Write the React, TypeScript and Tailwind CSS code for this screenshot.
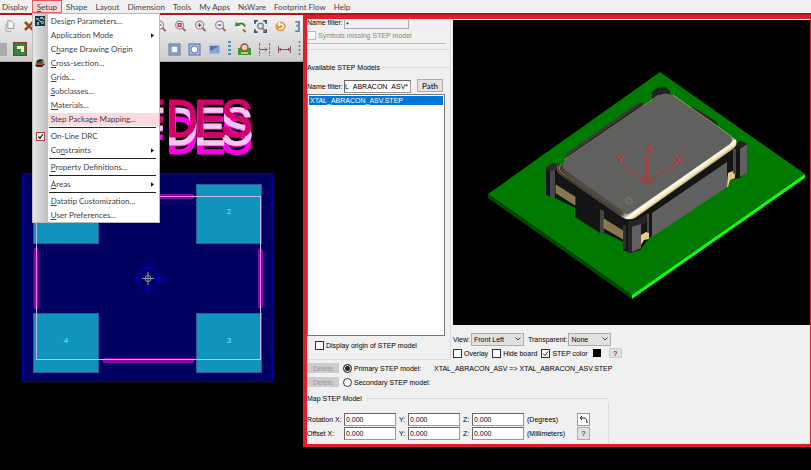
import React from 'react';

const menus = ['Display', 'Setup', 'Shape', 'Layout', 'Dimension', 'Tools', 'My Apps', 'NsWare', 'Footprint Flow', 'Help'];

type Item = { key?: string; before?: string; label: string; arrow?: boolean; active?: boolean; icon?: string };

const setupGroups: Item[][] = [
  [
    { label: 'Design Parameters...', icon: 'params' },
    { label: 'Application Mode', arrow: true },
    { before: 'C', key: 'h', label: 'ange Drawing Origin' },
    { key: 'C', label: 'ross-section...', icon: 'layers' },
    { key: 'G', label: 'rids...' },
    { key: 'S', label: 'ubclasses...' },
    { key: 'M', label: 'aterials...' },
    { label: 'Step Package Mapping...', active: true },
  ],
  [
    { label: 'On-Line DRC', icon: 'check' },
    { before: 'Co', key: 'n', label: 'straints', arrow: true },
  ],
  [{ key: 'P', label: 'roperty Definitions...' }],
  [{ key: 'A', label: 'reas', arrow: true }],
  [
    { key: 'D', label: 'atatip Customization...' },
    { key: 'U', label: 'ser Preferences...' },
  ],
];

function MenuIcon({ name }: { name?: string }) {
  if (name === 'check') {
    return (
      <svg viewBox="0 0 10 10" className="h-[9px] w-[9px]">
        <rect x="0.5" y="0.5" width="9" height="9" fill="#fff" stroke="#a03030" />
        <path d="M2.5 5l2 2 3-4.5" fill="none" stroke="#111" strokeWidth="1.4" />
      </svg>
    );
  }
  if (name === 'params') {
    return (
      <svg viewBox="0 0 10 10" className="h-[10px] w-[10px]">
        <rect width="10" height="10" fill="#1c3440" />
        <path d="M1 2h3v2H1zM6 5h3v3H6z" fill="#4b9ec0" />
        <path d="M5 1h2v2H5zM2 6h2v3H2z" fill="#7cc3a0" />
        <path d="M7 1l2 3M4 4l2 2" stroke="#dce8f0" />
      </svg>
    );
  }
  if (name === 'layers') {
    return (
      <svg viewBox="0 0 10 10" className="h-[10px] w-[10px]">
        <path d="M0 7l4-2 6 1-3 3H2z" fill="#2b2118" />
        <path d="M0 5l4-2 6 1-3 2H2z" fill="#44663a" />
        <path d="M1 3l4-2 4 1-3 2H2z" fill="#33261e" />
        <path d="M2 6.5h6" stroke="#b7512e" />
      </svg>
    );
  }
  return null;
}

function SetupMenu() {
  return (
    <div className="absolute left-0 top-full z-10 w-32 border border-[#b9b9b9] bg-gradient-to-r from-[#e6e6e6] to-[#bdbdbd] bg-[length:15px_100%] bg-no-repeat bg-white text-[#444]">
      {setupGroups.map((group, i) => (
        <div key={i}>
          {i > 0 && <div className="ml-4 mr-[3px] flex h-[3px] items-center"><hr className="w-full border-[#222]" /></div>}
          {group.map((item) => (
            <button key={item.label} className="flex h-[14px] w-full items-center text-left">
              <span className="flex w-[15px] shrink-0 justify-center"><MenuIcon name={item.icon} /></span>
              <span className={item.active ? 'flex h-[13px] grow items-center bg-[#fadadd] pl-[3px]' : 'flex grow items-center pl-[3px]'}>
                <span className="whitespace-nowrap">
                  {item.before}
                  {item.key && <u>{item.key}</u>}
                  {item.label}
                </span>
              </span>
              {item.arrow && (
                <svg viewBox="0 0 4 6" className="mr-[5px] h-[5px] w-[3px]">
                  <path d="M0 0l4 3-4 3z" fill="#111" />
                </svg>
              )}
            </button>
          ))}
        </div>
      ))}
    </div>
  );
}

function MenuBar() {
  return (
    <nav className="flex h-[13px] items-center bg-[#f0f0f0] font-[Lato,sans-serif] text-[8px] leading-none text-[#444]">
      {menus.map((name) =>
        name === 'Setup' ? (
          <div key={name} className="relative">
            <button className="h-[13px] border border-[#e05a60] bg-[#fbd5d7] px-1"><u>S</u>etup</button>
            <SetupMenu />
          </div>
        ) : (
          <button key={name} className="h-[13px] whitespace-nowrap px-1 first:pl-[2px]">{name}</button>
        )
      )}
    </nav>
  );
}

function Lens({ mark }: { mark: string }) {
  return (
    <svg viewBox="0 0 14 14" className="h-[14px] w-[13px]">
      <path d="M8.500 8.500l4 4" stroke="#9a6a4c" strokeWidth="2.200" />
      <circle cx="6" cy="6" r="4.300" fill="#eef0fa" stroke="#8a8aa8" strokeWidth="1.300" />
      <path d={mark} fill="none" stroke="#c8283a" strokeWidth="1.400" />
    </svg>
  );
}

function Toolbar() {
  return (
    <div className="flex h-[47px] flex-col justify-around border-b border-[#a8a8a8] bg-gradient-to-b from-[#f2f2f2] to-[#cccccc]">
      <div className="flex items-center justify-between pl-1 pr-[2px]">
        <div className="flex items-center gap-[9px]">
          <svg viewBox="0 0 12 14" className="h-3 w-[11px]">
            <path d="M4 1h4l3 3v6H4zM2 4v9h6" fill="#f6f6f6" stroke="#8c8c8c" />
          </svg>
          <svg viewBox="0 0 10 10" className="h-[10px] w-[10px]">
            <path d="M1 1l8 8M9 1L1 9" stroke="#9c4a1c" strokeWidth="2.500" />
          </svg>
        </div>
        <div className="flex items-center gap-[7px]">
          <Lens mark="M4 6h4" />
          <Lens mark="M4.500 4.500h3v3h-3z" />
          <Lens mark="M4 6h4M6 4v4" />
          <Lens mark="M4 6h4" />
          <svg viewBox="0 0 14 14" className="h-[13px] w-[13px]">
            <path d="M8.500 9l4 4" stroke="#9a6a4c" strokeWidth="2.200" />
            <circle cx="7" cy="7" r="4" fill="#e8efe8" />
            <path d="M12 7C10 3 7 3 4 5" fill="none" stroke="#3c8c3c" strokeWidth="2.200" />
            <path d="M1 7l1-5 5 4z" fill="#3c8c3c" />
          </svg>
          <svg viewBox="0 0 14 14" className="h-[13px] w-[13px]">
            <path d="M1 4V1h3M10 1h3v3M13 10v3h-3M4 13H1v-3" fill="none" stroke="#345a7c" strokeWidth="2" />
            <circle cx="7" cy="6.500" r="3" fill="#dce9f5" stroke="#6b87a0" strokeWidth="1.400" />
            <path d="M9 9l3 3" stroke="#a87440" strokeWidth="2" />
          </svg>
          <svg viewBox="0 0 14 14" className="h-[13px] w-[13px]">
            <circle cx="7" cy="7" r="5.500" fill="#e9963c" />
            <path d="M5 4.500h2.500a2.500 2.500 0 010 5H5M6.500 2.500l-2 2 2 2" fill="none" stroke="#fff" strokeWidth="1.500" />
          </svg>
          <svg viewBox="0 0 7 14" className="h-[13px] w-[7px]">
            <path d="M1 2h4v4H2h3v6H1" fill="none" stroke="#6688b0" strokeWidth="2" />
          </svg>
        </div>
      </div>
      <div className="flex items-center justify-between pr-[2px]">
        <div className="flex items-center gap-[6px]">
          <span className="h-[13px] w-[7px] bg-[#aaa]" />
          <svg viewBox="0 0 14 14" className="h-[14px] w-[14px]">
            <rect x="0.500" y="0.500" width="13" height="13" fill="#3b8040" stroke="#883828" />
            <path d="M4 4h7v6H8V7H4z" fill="#e2f3d8" />
          </svg>
        </div>
        <div className="flex items-center gap-[7px]">
          <svg viewBox="0 0 13 13" className="h-[13px] w-[13px]">
            <rect x="1" y="1" width="11" height="11" fill="#a9bde0" stroke="#5670a4" />
            <rect x="3" y="3" width="7" height="7" fill="#f2f5fb" stroke="#5670a4" />
          </svg>
          <svg viewBox="0 0 13 13" className="h-[13px] w-[13px]">
            <rect x="1" y="1" width="11" height="11" fill="#a9bde0" stroke="#5670a4" />
            <circle cx="6.500" cy="6.500" r="3.500" fill="#f2f5fb" stroke="#5670a4" />
          </svg>
          <svg viewBox="0 0 13 13" className="h-[13px] w-[13px]">
            <rect x="1" y="2" width="11" height="9" fill="#8aa2cf" stroke="#c5d0e6" />
            <path d="M2 3h9L2 8z" fill="#5670a4" />
          </svg>
          <svg viewBox="0 0 3 16" className="h-4 w-[3px]">
            <path d="M1.500 0v16" stroke="#4f94c4" strokeWidth="3" strokeDasharray="2 2" />
          </svg>
          <svg viewBox="0 0 13 13" className="h-[13px] w-[13px]">
            <rect y="5" width="13" height="7" fill="#3c9a34" />
            <circle cx="6.500" cy="4.500" r="3.500" fill="#d7d7b8" stroke="#a8503c" strokeWidth="1.500" />
            <path d="M3 10h7" stroke="#e6e070" strokeWidth="1.500" />
          </svg>
          <svg viewBox="0 0 13 13" className="h-[13px] w-[13px]">
            <path d="M1.500 0v13M11.500 0v13" stroke="#777" strokeDasharray="3 1" />
            <path d="M2 6.500h7M7 4.500l2 2-2 2" fill="none" stroke="#b8444c" />
          </svg>
          <svg viewBox="0 0 13 13" className="h-[13px] w-[13px]">
            <path d="M0.500 3v7M12.500 3v7" stroke="#666" />
            <path d="M1 6.500h11M3 5L1 6.500 3 8M10 5l2 1.500L10 8" fill="none" stroke="#b8444c" />
          </svg>
          <svg viewBox="0 0 3 16" className="h-4 w-[3px]">
            <path d="M1.500 0v16" stroke="#888" strokeWidth="2" strokeDasharray="2 2" />
          </svg>
        </div>
      </div>
    </div>
  );
}

// pad 1 has its number under the open menu
const pads = [
  { x: 34, y: 123, label: '' },
  { x: 197, y: 123, label: '2' },
  { x: 34, y: 252, label: '4' },
  { x: 197, y: 252, label: '3' },
];

function BoardCanvas() {
  return (
    <svg viewBox="0 0 303 408" className="w-full bg-black">
      <text
        x="150 182 210 237"
        y="75"
        textAnchor="middle"
        fontSize="56"
        fill="#d6006c"
        stroke="#d6006c"
        strokeWidth="1"
        strokeLinejoin="round"
        className="font-['Liberation_Mono',monospace] [filter:drop-shadow(0_8px_0_#ffc4f4)_drop-shadow(0_9px_0_#ff00e6)]"
      >
        FDES
      </text>
      <rect x="22.500" y="111.500" width="250" height="208" fill="#000062" stroke="#0000b0" />
      {pads.map((pad) => (
        <g key={pad.label}>
          <rect x={pad.x - 0.5} y={pad.y - 0.5} width="65" height="59" fill="#1094bc" stroke="#2e5b96" />
          {pad.label && <text x={pad.x + 32} y={pad.y + 29} textAnchor="middle" fontSize="8" fill="#7fe9f4">{pad.label}</text>}
        </g>
      ))}
      <path d="M104 134.500h88M105 298.500h87M36 188v57M260.500 189v55" stroke="#8a06a8" strokeWidth="5" strokeLinecap="round" />
      <rect x="36.500" y="134.500" width="224" height="163" fill="none" stroke="#c8b8ee" />
      <path d="M36.500 188v57M260.500 189v55M104 134.500h88" stroke="#f07cf4" />
      <g fill="none" stroke="#0000c8">
        <circle cx="148" cy="216.500" r="11" />
        <path d="M133 216.500h30M148 201v31" />
      </g>
      <g fill="none" stroke="#8f9c9c">
        <circle cx="148" cy="216.500" r="3" />
        <path d="M142 216.500h12M148 210v13" />
      </g>
    </svg>
  );
}

function StepViewer() {
  return (
    <svg viewBox="453 20 357 305" className="w-full bg-black">
      <defs>
        <linearGradient id="rim" gradientUnits="userSpaceOnUse" x1="679" y1="177" x2="684" y2="184">
          <stop offset="0" stopColor="#9a9a98" />
          <stop offset="0.350" stopColor="#fffdf4" />
          <stop offset="0.700" stopColor="#f4e8b4" />
          <stop offset="1" stopColor="#b5a268" />
        </linearGradient>
      </defs>
      <path d="M660 72l145 102-173 121-144-101z" fill="#007a00" />
      <path d="M488 194l144 101v4L488 198z" fill="#004a00" />
      <path d="M632 295l173-121v4L632 299z" fill="#19f519" />

      <path d="M566 155L638 103h5v6l-75 53z" fill="#2c2c2c" />
      <path d="M566 155l1-2 71-50 5-1-75 54v6z" fill="#3b3b3b" />
      <path d="M652 92l5-4 8-1 5 4v7l-18 8z" fill="#222" />
      <path d="M690 108l3-1 24 15 1 6z" fill="#262626" />

      <path d="M546 168l8-4 8 2 65 54 108-76 5-3 7 3v28l-7 6-12 2-76 55-12 15-10 3-7-3v-8l-18-9h-5l-25-16v-9l-20-10-9-3z" fill="#151515" />
      <path d="M546 167l7-4 8 2-6 6-5 1z" fill="#2c2c2c" />
      <path d="M550 171l5-1v28h-5z" fill="#474747" />
      <path d="M600 209l4 2v22h-4z" fill="#454545" />
      <path d="M556 185l19 12v8l-19-12zM604 219l19 12v8l-19-11z" fill="#85774e" stroke="#b5a56f" strokeWidth="0.500" />
      <path d="M628 221l8-1 11-6v8l-6 4v24l-11 3-2-1z" fill="#252525" />
      <path d="M632 227l9-3v24l-9 4z" fill="#606060" />
      <path d="M623 225h3v25l-3-2z" fill="#303030" />
      <path d="M647 214h2v21h-2z" fill="#484848" />
      <path d="M652 213l75-51v25l-75 50z" fill="#616161" />
      <path d="M641 235l5-3 3 1v6l-5 1-3 5z" fill="#e2cd8c" />
      <path d="M728 173l5-2 2 1v6l-5 2-2 7h-1z" fill="#e2cd8c" />
      <path d="M733 149h3v26l-3-2z" fill="#484848" />
      <path d="M740 148l7-4v29l-7 4z" fill="#606060" />
      <path d="M733 146l7-5 7 3-7 5z" fill="#202020" />

      <path d="M558 165q-3 6 3 10l61 42q6 4 13 1l98-69q5-4 3-9l-5-4-102 72z" fill="url(#rim)" />
      <path d="M560 163q-6 7 1 12l60 41 4-5-58-42z" fill="#41392a" />
      <path d="M561 164q-4 6 2 10l59 39" fill="none" stroke="#94835a" />
      <path d="M565 160l95-65q5-3 12 0l58 41q4 4 0 8l-98 68q-6 4-11 0l-56-42q-5-4 0-10z" fill="#60615e" />
      <path d="M563 169l57 40q5 4 3 7l-59-41z" fill="#4e4a3f" />
      <path d="M673 95l58 41" stroke="#a9987a" />
      <path d="M564 160l95-65" stroke="#89826d" />
      <circle cx="629" cy="201" r="3" fill="none" stroke="#9c7c34" strokeWidth="2" strokeDasharray="1 1" />

      <g stroke="#d62424" fill="none">
        <path d="M646.500 183v-28M646.500 183l-25-18M646.500 183l28-20" />
        <path d="M641 180l5 3 6-3" />
      </g>
      <g fill="#ee1c1c" fontSize="11" textAnchor="middle">
        <text x="649" y="151">Z</text>
        <text x="620" y="164">Y</text>
        <text x="678" y="164">X</text>
      </g>
    </svg>
  );
}

const field = 'h-[13px] min-w-0 border border-[#999] border-t-[#666] border-l-[#666] bg-white text-black';

function Check({ label, checked, muted }: { label: string; checked?: boolean; muted?: boolean }) {
  return (
    <label className={muted ? 'flex items-center gap-[2px] text-[#888]' : 'flex items-center gap-[2px]'}>
      <span className="relative flex">
        <input
          type="checkbox"
          defaultChecked={checked}
          disabled={muted}
          className="peer h-[9px] w-[9px] appearance-none border border-[#333] bg-white disabled:border-[#bbb]"
        />
        <svg viewBox="0 0 9 9" className="pointer-events-none absolute inset-0 hidden h-[9px] w-[9px] peer-checked:block">
          <path d="M2 4.500l2 2 3-4" fill="none" stroke="#222" />
        </svg>
      </span>
      {label}
    </label>
  );
}

function ModelList() {
  return (
    <div className="flex w-[144px] shrink-0 flex-col border-b border-r border-[#dcdcdc]">
      <div className="mr-px border-b border-[#dcdcdc] pb-[5px]">
        <label className="flex h-[9px] items-start">
          <span className="w-[37px] leading-[6px]">Name filter:</span>
          <input className="h-[9px] w-[65px] border border-t-0 border-[#aaa] bg-[#f0f0f0] px-px leading-[6px]" defaultValue="*" />
        </label>
        <div className="mt-[2px] mr-1 border-b border-[#bbb] pb-[3px]">
          <Check label="Symbols missing STEP model" muted />
        </div>
      </div>
      <fieldset className="mt-[13px] flex grow flex-col">
        <div className="flex items-center gap-[2px]">
          <h2>Available STEP Models</h2>
          <span className="h-px grow bg-[#dcdcdc]" />
        </div>
        <div className="mt-[7px] flex h-[15px] items-start">
          <label className="flex h-[15px] items-center">
            <span className="w-[37px]">Name filter:</span>
            <input className={`${field} w-[67px]`} defaultValue="L_ABRACON_ASV*" />
          </label>
          <button className="ml-[6px] h-[13px] w-[26px] border border-[#adadad] bg-[#e1e1e1] font-[Lato,sans-serif] text-[8px] leading-none">Path</button>
        </div>
        <ul className="mr-[5px] h-[242px] border border-[#777] bg-white p-px">
          <li className="h-[9px] bg-[#0078d7] pl-px leading-[9px] text-white">XTAL_ABRACON_ASV.STEP</li>
        </ul>
        <div className="py-[5px] pl-2">
          <Check label="Display origin of STEP model" />
        </div>
      </fieldset>
    </div>
  );
}

function ModelRadio({ label, checked }: { label: string; checked?: boolean }) {
  return (
    <div className="flex h-[14px] items-center">
      <button disabled className="mr-1 h-[10px] w-8 bg-[#ccc] text-[#999]">Delete</button>
      <label className="flex w-[91px] items-center gap-[2px]">
        <input
          type="radio"
          name="model"
          defaultChecked={checked}
          className="h-[9px] w-[9px] appearance-none rounded-full border border-[#333] bg-white checked:bg-[#222] checked:shadow-[inset_0_0_0_1px_#fff]"
        />
        {label}
      </label>
      {checked && <span className="whitespace-nowrap">XTAL_ABRACON_ASV =&gt; XTAL_ABRACON_ASV.STEP</span>}
    </div>
  );
}

function AxisRow({ name, unit, children }: { name: string; unit: string; children: React.ReactNode }) {
  return (
    <div className="flex h-[14px] items-center">
      {['X', 'Y', 'Z'].map((axis) => (
        <label key={axis} className="flex items-center">
          <span className={axis === 'X' ? 'w-[37px] whitespace-nowrap' : 'w-3 pl-[3px]'}>{axis === 'X' ? `${name} X:` : `${axis}:`}</span>
          <input className={`${field} w-[52px] px-px`} defaultValue="0.000" />
        </label>
      ))}
      <span className="ml-[3px] w-[50px]">{unit}</span>
      {children}
    </div>
  );
}

function MapModel() {
  return (
    <fieldset className="mt-[5px] w-[302px]">
      <div className="flex items-center gap-1">
        <h2>Map STEP Model</h2>
        <span className="h-px grow bg-[#dcdcdc]" />
      </div>
      <div className="border-r border-[#dcdcdc] pb-[4px] pt-[9px]">
        <AxisRow name="Rotation" unit="(Degrees)">
          <button aria-label="Reset" className="flex h-[13px] w-[13px] items-center justify-center border border-[#999] bg-white">
            <svg viewBox="0 0 9 9" className="h-[9px] w-[9px]">
              <path d="M1 3h4q3 0 3 5M3 1L1 3l2 2" fill="none" stroke="#222" />
            </svg>
          </button>
        </AxisRow>
        <AxisRow name="Offset" unit="(Millimeters)">
          <button className="h-[13px] w-[13px] border border-[#adadad] bg-[#e1e1e1]">?</button>
        </AxisRow>
      </div>
    </fieldset>
  );
}

const dropdown = 'h-[13px] appearance-none border border-[#adadad] bg-[#e1e1e1] pl-[2px]';

function Dropdown({ label, value, wide }: { label: string; value: string; wide?: boolean }) {
  return (
    <label className="flex items-center gap-px">
      {label}
      <span className="relative flex">
        <select className={wide ? `${dropdown} w-[53px]` : `${dropdown} w-[43px]`}>
          <option>{value}</option>
        </select>
        <svg viewBox="0 0 6 4" className="pointer-events-none absolute right-[3px] top-1 h-1 w-[6px]">
          <path d="M0.500 0.500L3 3l2.500-2.500" fill="none" stroke="#444" />
        </svg>
      </span>
    </label>
  );
}

function StepPanel() {
  return (
    <section className="flex flex-col border-4 border-r border-b-[3px] border-[#dc1f2b] bg-[#f0f0f0] pt-px text-black">
      <div className="flex gap-[2px]">
        <ModelList />
        <div className="min-w-0 grow">
          <StepViewer />
          <div className="flex gap-1 pt-2">
            <Dropdown label="View:" value="Front Left" wide />
            <Dropdown label="Transparent:" value="None" />
          </div>
          <div className="flex h-[14px] items-center gap-1">
            <Check label="Overlay" />
            <Check label="Hide board" />
            <Check label="STEP color" checked />
            <span className="ml-px h-2 w-2 bg-black" />
            <button className="ml-1 h-[10px] w-[13px] border border-[#ccc] bg-[#e1e1e1] leading-none">?</button>
          </div>
        </div>
      </div>
      <div className="pt-px">
        <ModelRadio label="Primary STEP model:" checked />
        <ModelRadio label="Secondary STEP model:" />
      </div>
      <MapModel />
    </section>
  );
}

export default function App() {
  return (
    <div className="min-h-screen overflow-hidden bg-black font-['Liberation_Sans',Arial,sans-serif] text-[7px] leading-[9px]">
      <MenuBar />
      <main className="grid grid-cols-[303px_1fr] items-start border-t-2 border-[#b8101c]">
        <div>
          <Toolbar />
          <BoardCanvas />
        </div>
        <StepPanel />
      </main>
    </div>
  );
}
